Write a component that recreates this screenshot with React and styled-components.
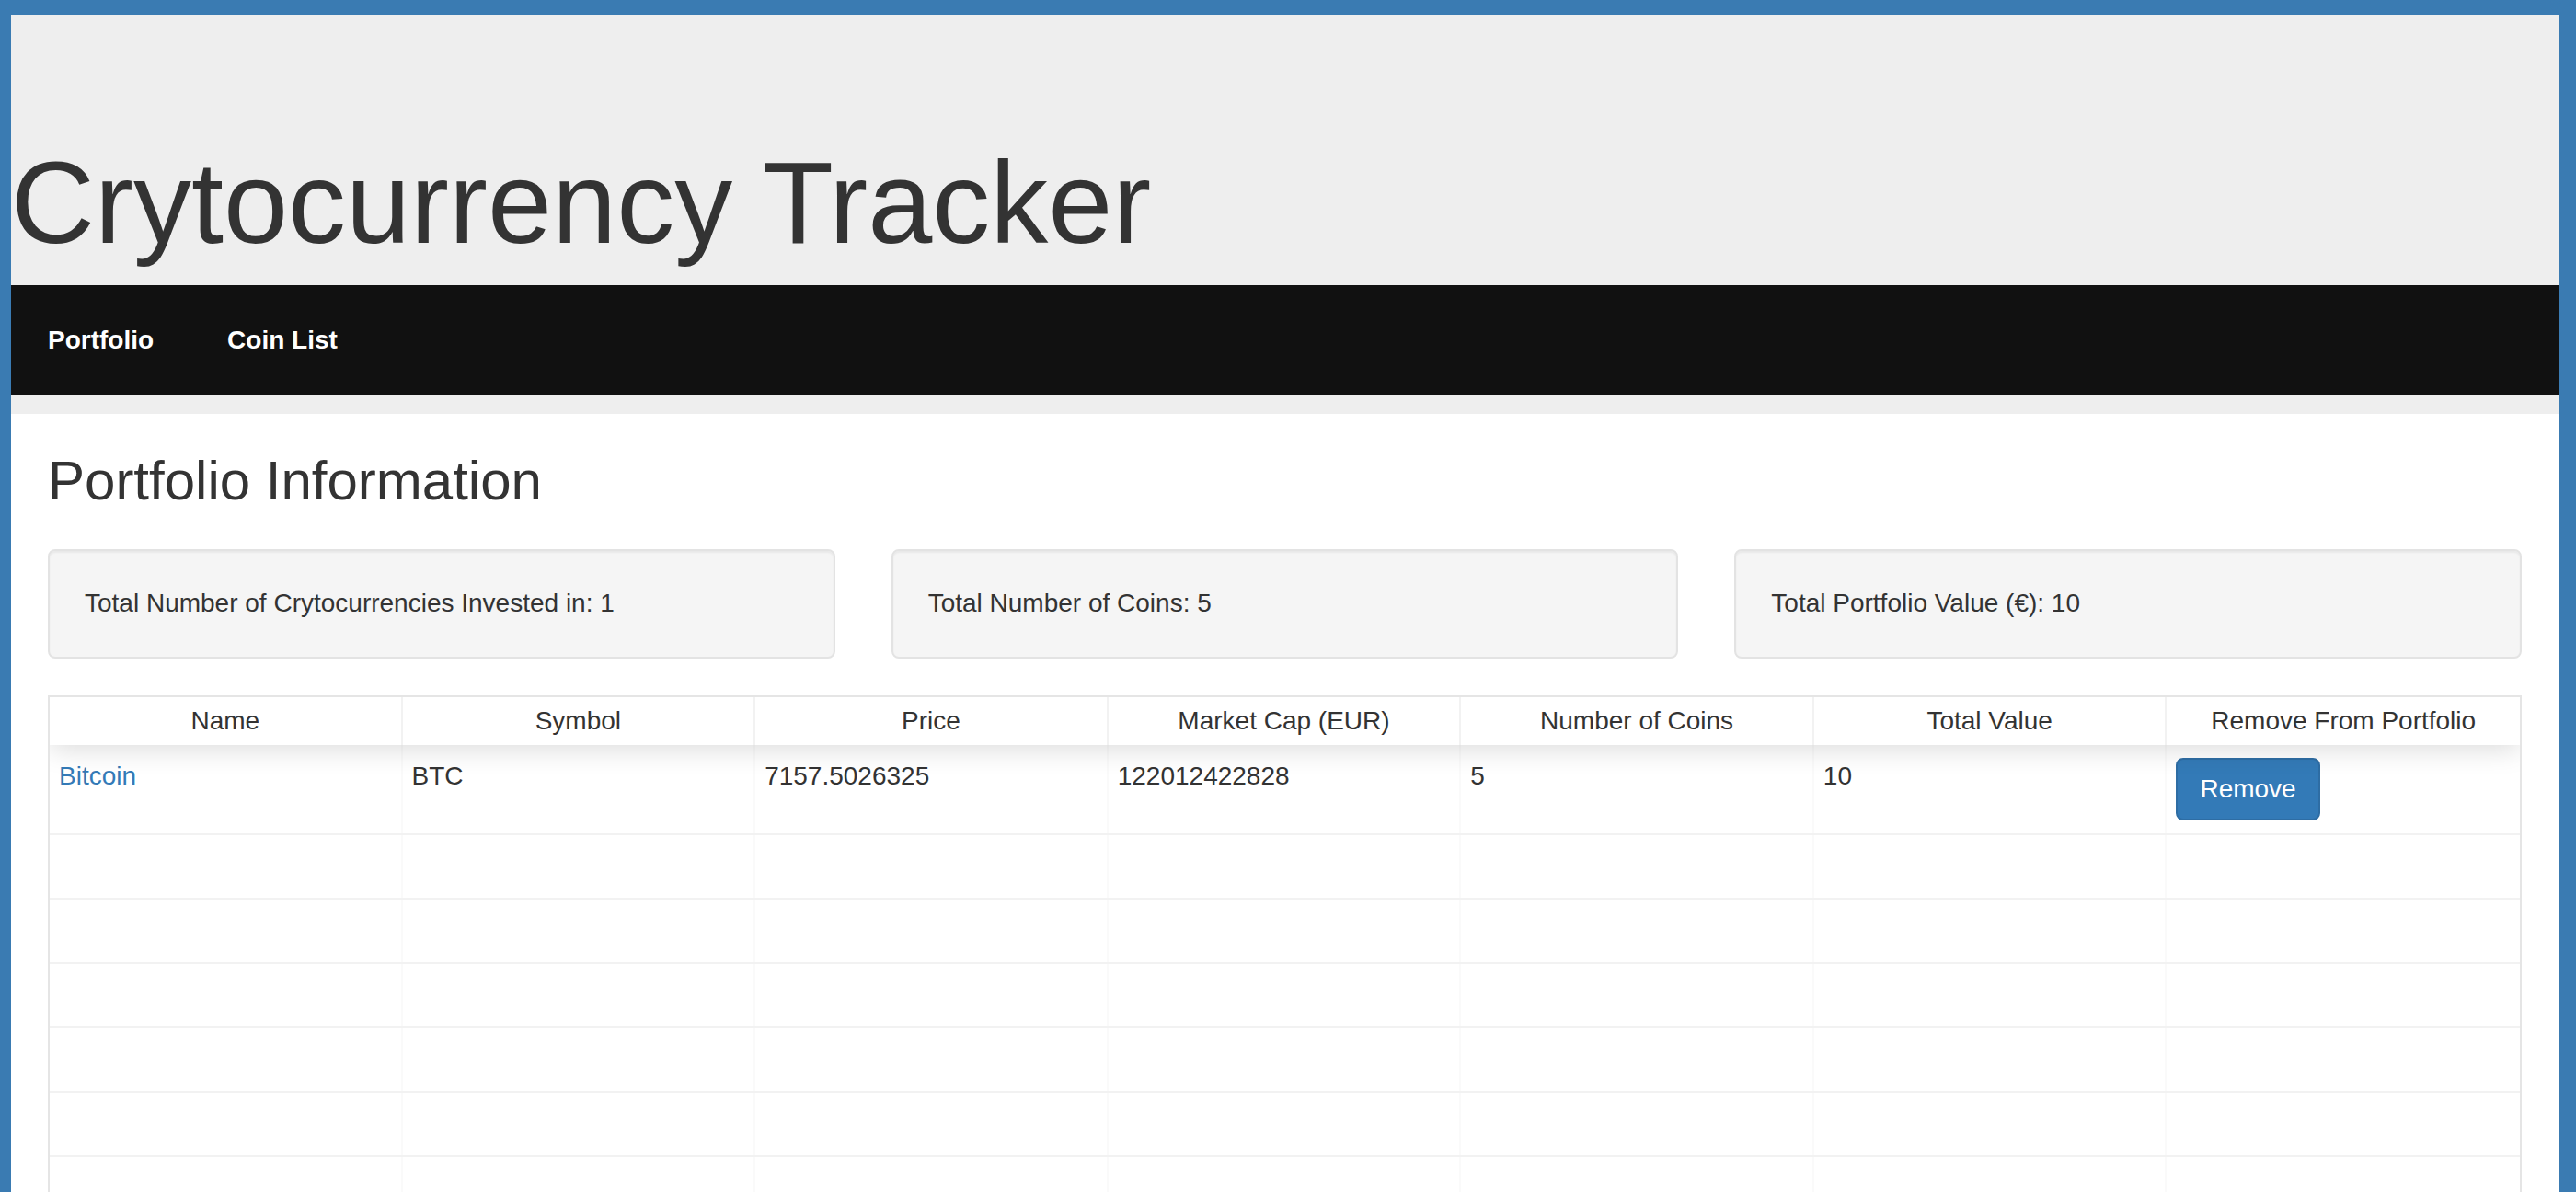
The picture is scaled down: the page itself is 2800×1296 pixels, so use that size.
import React from 'react';
import styled, { createGlobalStyle } from 'styled-components';

const COLORS = {
  frame: '#3a7bb2',
  jumbo: '#eeeeee',
  navbar: '#111111',
  text: '#333333',
  link: '#337ab7',
  well: '#f5f5f5',
  wellBorder: '#e3e3e3',
};

const GlobalStyle = createGlobalStyle`
  html {
    background: ${COLORS.frame};
  }
  body {
    margin: 0;
    padding: 16px 18px 0 12px;
    font-family: "Liberation Sans", Arial, Helvetica, sans-serif;
    color: ${COLORS.text};
    font-size: 28px;
    line-height: 40px;
  }
  * {
    box-sizing: border-box;
  }
`;

const Page = styled.div`
  background: white;
  min-height: 1400px;
`;

const Jumbotron = styled.header`
  background: ${COLORS.jumbo};
  padding: 136px 0 20px 0;
`;

const Title = styled.h1`
  margin: 0;
  font-size: 126px;
  line-height: 138px;
  font-weight: 400;
  color: ${COLORS.text};
`;

const Navbar = styled.nav`
  margin-top: 20px;
  height: 120px;
  background: ${COLORS.navbar};
  display: flex;
  align-items: center;
`;

const NavLink = styled.a`
  padding: 0 40px;
  color: white;
  font-weight: 700;
  font-size: 28px;
  text-decoration: none;
  cursor: pointer;
`;

const Content = styled.main`
  padding: 0 41px 0 40px;
`;

const SectionTitle = styled.h2`
  margin: 40px 0 41px 0;
  font-size: 60px;
  line-height: 66px;
  font-weight: 400;
`;

const Stats = styled.div`
  display: grid;
  grid-template-columns: repeat(3, 1fr);
  gap: 61px;
  margin-bottom: 40px;
`;

const Well = styled.div`
  background: ${COLORS.well};
  border: 2px solid ${COLORS.wellBorder};
  border-radius: 8px;
  box-shadow: inset 0 2px 2px rgba(0, 0, 0, 0.05);
  padding: 37px 38px 38px 38px;
  line-height: 40px;
`;

const Table = styled.div`
  border: 2px solid rgba(0, 0, 0, 0.1);
  overflow: hidden;
`;

const HeadRow = styled.div`
  display: grid;
  grid-template-columns: repeat(7, 1fr);
  position: relative;
  z-index: 1;
  box-shadow: 0 4px 30px 0 rgba(0, 0, 0, 0.15);
`;

const HeadCell = styled.div`
  padding: 10px;
  line-height: 32px;
  text-align: center;
  border-right: 2px solid rgba(0, 0, 0, 0.05);
  &:last-child {
    border-right: 0;
  }
`;

const Row = styled.div`
  display: grid;
  grid-template-columns: repeat(7, 1fr);
  border-bottom: 2px solid rgba(0, 0, 0, 0.05);
`;

const Cell = styled.div`
  padding: 14px 10px;
  min-height: 68px;
  line-height: 40px;
  border-right: 2px solid rgba(0, 0, 0, 0.02);
  &:last-child {
    border-right: 0;
  }
`;

const CoinLink = styled.a`
  color: ${COLORS.link};
  text-decoration: none;
`;

const RemoveButton = styled.button`
  display: block;
  height: 68px;
  padding: 12px 24px;
  font-family: inherit;
  font-size: 28px;
  line-height: 40px;
  color: white;
  background: #337ab7;
  border: 2px solid #2e6da4;
  border-radius: 8px;
  cursor: pointer;
`;

const columns = [
  'Name',
  'Symbol',
  'Price',
  'Market Cap (EUR)',
  'Number of Coins',
  'Total Value',
  'Remove From Portfolio',
];

const portfolio = [
  {
    name: 'Bitcoin',
    symbol: 'BTC',
    price: '7157.5026325',
    marketCap: '122012422828',
    coins: 5,
    value: 10,
  },
];

const EMPTY_ROWS = 10;

function App() {
  const totalCoins = portfolio.reduce((sum, c) => sum + c.coins, 0);
  const totalValue = portfolio.reduce((sum, c) => sum + c.value, 0);

  return (
    <>
      <GlobalStyle />
      <Page>
        <Jumbotron>
          <Title>Crytocurrency Tracker</Title>
          <Navbar>
            <NavLink>Portfolio</NavLink>
            <NavLink>Coin List</NavLink>
          </Navbar>
        </Jumbotron>

        <Content>
          <SectionTitle>Portfolio Information</SectionTitle>
          <Stats>
            <Well>Total Number of Crytocurrencies Invested in: {portfolio.length}</Well>
            <Well>Total Number of Coins: {totalCoins}</Well>
            <Well>Total Portfolio Value (€): {totalValue}</Well>
          </Stats>

          <Table>
            <HeadRow>
              {columns.map((col) => (
                <HeadCell key={col}>{col}</HeadCell>
              ))}
            </HeadRow>
            {portfolio.map((coin) => (
              <Row key={coin.symbol}>
                <Cell>
                  <CoinLink>{coin.name}</CoinLink>
                </Cell>
                <Cell>{coin.symbol}</Cell>
                <Cell>{coin.price}</Cell>
                <Cell>{coin.marketCap}</Cell>
                <Cell>{coin.coins}</Cell>
                <Cell>{coin.value}</Cell>
                <Cell>
                  <RemoveButton>Remove</RemoveButton>
                </Cell>
              </Row>
            ))}
            {Array.from({ length: EMPTY_ROWS }).map((_, i) => (
              <Row key={'pad' + i}>
                {columns.map((col) => (
                  <Cell key={col} />
                ))}
              </Row>
            ))}
          </Table>
        </Content>
      </Page>
    </>
  );
}

export default App;
